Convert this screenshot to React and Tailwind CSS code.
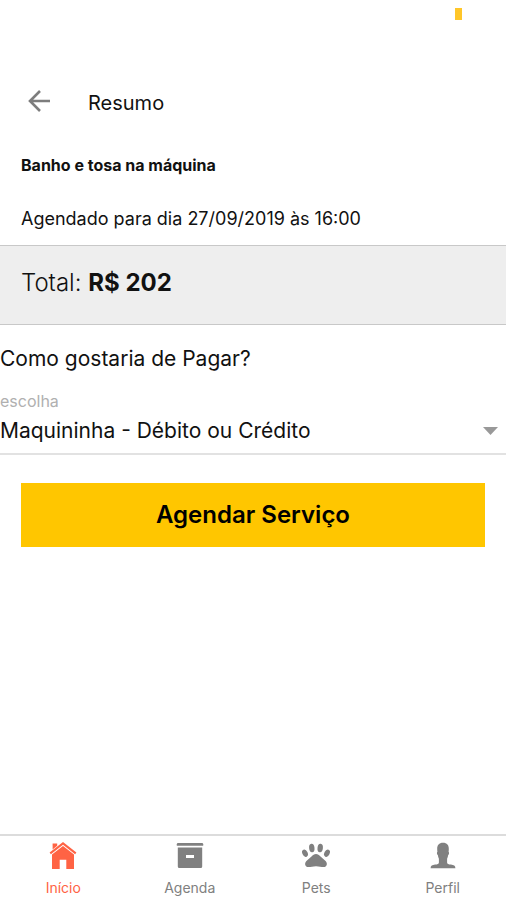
import React, { useState } from 'react';

/* ── Icons ─────────────────────────────────────────────────── */
function ArrowIcon() {
  return (
    <svg width="24" height="24" viewBox="0 0 24 24" fill="none" stroke="currentColor" strokeWidth="2.6" aria-hidden="true">
      <path d="M22 12H2M12 2L2 12l10 10" />
    </svg>
  );
}

function HomeIcon() {
  return (
    <svg width="28" height="28" viewBox="0 0 28 28" fill="currentColor" aria-hidden="true">
      <path d="M14 0L.6 10.600l1.300 1.600L14 2.700l12.100 9.500 1.300-1.600z" />
      <path d="M3.600 1.600h4.600v2.200L3.600 7.400z" />
      <path d="M14 4L3 12.600V27h7.700v-9.200h6.600V27H25V12.600z" />
    </svg>
  );
}

function BoxIcon() {
  return (
    <svg width="28" height="28" viewBox="0 0 28 28" fill="currentColor" aria-hidden="true">
      <path d="M2 1h24q1.200 0 1.200 1.200v1.600H.8V2.200Q.8 1 2 1z" />
      <path fillRule="evenodd" d="M1.800 5.500h24.400v19q0 1.500-1.500 1.500H3.300q-1.500 0-1.500-1.500zM10 13v2.900h8V13z" />
    </svg>
  );
}

function PawIcon() {
  return (
    <svg width="28" height="28" viewBox="0 0 28 28" fill="currentColor" aria-hidden="true">
      <ellipse cx="3" cy="11.200" rx="2.600" ry="3.900" transform="rotate(-25 3 11.200)" />
      <ellipse cx="9.800" cy="6" rx="2.700" ry="4.300" transform="rotate(-6 9.800 6)" />
      <ellipse cx="18.200" cy="6" rx="2.700" ry="4.300" transform="rotate(6 18.200 6)" />
      <ellipse cx="25" cy="11.200" rx="2.600" ry="3.900" transform="rotate(25 25 11.200)" />
      <path d="M14 12c-1.900 0-3.100 1.200-4.500 2.600-1.600 1.600-3.500 2.700-5.100 4.300-2.300 2.300-1.300 6.100 1.900 6.100 2.800 0 4.400-.8 7.700-.8s4.900.8 7.700.8c3.200 0 4.200-3.800 1.900-6.100-1.600-1.600-3.500-2.700-5.100-4.300C17.100 13.200 15.900 12 14 12z" />
    </svg>
  );
}

function PersonIcon() {
  return (
    <svg width="28" height="28" viewBox="0 0 28 28" fill="currentColor" aria-hidden="true">
      <path d="M14 .8c4 0 5.900 2.400 5.800 6.200 0 1-.1 1.900-.2 2.700.8.400.5 2.900-.4 3.400-.2 1.500-.6 2.600-1.100 3.600v3.700c0 1.600 1.500 1.900 3.800 2.200 2.900.4 4.500 1.100 4.500 3.600H1.600c0-2.500 1.600-3.200 4.500-3.600 2.300-.3 3.800-.6 3.800-2.200v-3.700c-.5-1-.9-2.100-1.100-3.600-.9-.5-1.200-3-.4-3.400-.1-.8-.2-1.700-.2-2.700C8.100 3.200 10 .8 14 .8z" />
    </svg>
  );
}

const tabs = [
  { id: 'inicio', label: 'Início', Icon: HomeIcon },
  { id: 'agenda', label: 'Agenda', Icon: BoxIcon },
  { id: 'pets', label: 'Pets', Icon: PawIcon },
  { id: 'perfil', label: 'Perfil', Icon: PersonIcon },
];

export default function App() {
  const [payment, setPayment] = useState('maquininha');
  const [active, setActive] = useState('inicio');

  return (
    <div className="min-h-screen flex flex-col bg-white text-[#111111] font-['Inter',sans-serif]">

      {/* ── Status strip ──────────────────────────────────────── */}
      <div className="h-[79px] flex justify-end items-start pt-2 pr-11">
        <span className="w-[7px] h-3 bg-[#ffc629]" />
      </div>

      {/* ── Header ────────────────────────────────────────────── */}
      <header className="h-12 flex items-center gap-9 px-7">
        <button type="button" aria-label="Voltar" className="text-[#7d7d7d] pb-1">
          <ArrowIcon />
        </button>
        <h1 className="text-xl">Resumo</h1>
      </header>

      <main className="flex-1">
        <section className="px-[21px] pt-[26px] pb-3">
          <h2 className="text-base font-bold">Banho e tosa na máquina</h2>
          <p className="mt-7 text-lg">Agendado para dia 27/09/2019 às 16:00</p>
        </section>

        <section className="h-20 px-[21px] pb-1 flex items-center bg-[#eeeeee] border-y border-[#c8c8c8]">
          <p className="text-2xl font-light">Total: <strong className="font-bold">R$ 202</strong></p>
        </section>

        {/* ── Payment ─────────────────────────────────────────── */}
        <section className="pt-5">
          <h3 className="text-[21px] leading-7">Como gostaria de Pagar?</h3>
          <div className="mt-5 border-b-2 border-[#e2e2e2]">
            <label htmlFor="payment" className="block text-base leading-4 text-[#b0b0b0]">escolha</label>
            <div className="relative">
              <select
                id="payment"
                value={payment}
                onChange={(e) => setPayment(e.target.value)}
                className="block w-full h-11 appearance-none bg-transparent pr-10 text-[21px]">
                <option value="maquininha">Maquininha - Débito ou Crédito</option>
                <option value="dinheiro">Dinheiro</option>
              </select>
              <svg className="absolute right-2 top-[18px] pointer-events-none text-[#999999]" width="15" height="8" viewBox="0 0 15 8" fill="currentColor" aria-hidden="true">
                <path d="M0 0h15L7.500 8z" />
              </svg>
            </div>
          </div>
        </section>

        <div className="px-[21px] pt-7">
          <button type="button" className="w-full h-16 bg-[#ffc600] text-black text-2xl font-semibold">
            Agendar Serviço
          </button>
        </div>
      </main>

      {/* ── Tab bar ───────────────────────────────────────────── */}
      <nav className="grid grid-cols-4 border-t-2 border-[#dcdcdc] pt-1.5 pb-0.5">
        {tabs.map(({ id, label, Icon }) => (
          <button
            key={id}
            type="button"
            onClick={() => setActive(id)}
            className={`flex flex-col items-center gap-2 ${active === id ? 'text-[#ff6344]' : 'text-[#808080]'}`}>
            <Icon />
            <span className="text-sm">{label}</span>
          </button>
        ))}
      </nav>
    </div>
  );
}
